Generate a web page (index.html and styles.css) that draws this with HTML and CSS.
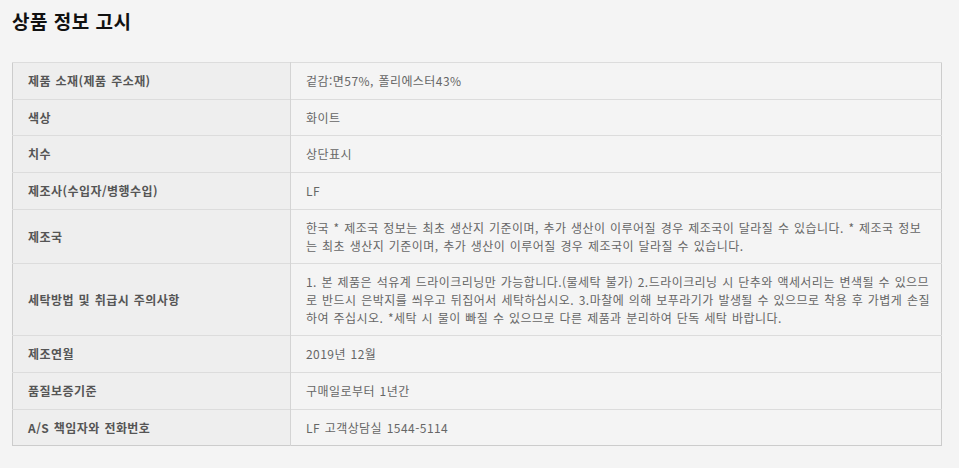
FILE: index.html
```html
<!DOCTYPE html>
<html lang="ko">
<head>
<meta charset="utf-8">
<title>상품 정보 고시</title>
<link rel="stylesheet" href="styles.css">
</head>
<body>
<div class="page">
  <h1 class="title">상품 정보 고시</h1>
  <table class="info">
    <tbody>
      <tr><th>제품 소재(제품 주소재)</th><td>겉감:면57%, 폴리에스터43%</td></tr>
      <tr><th>색상</th><td>화이트</td></tr>
      <tr><th>치수</th><td>상단표시</td></tr>
      <tr><th>제조사(수입자/병행수입)</th><td>LF</td></tr>
      <tr><th>제조국</th><td>한국 * 제조국 정보는 최초 생산지 기준이며, 추가 생산이 이루어질 경우 제조국이 달라질 수 있습니다. * 제조국 정보<br>는 최초 생산지 기준이며, 추가 생산이 이루어질 경우 제조국이 달라질 수 있습니다.</td></tr>
      <tr><th>세탁방법 및 취급시 주의사항</th><td>1. 본 제품은 석유계 드라이크리닝만 가능합니다.(물세탁 불가) 2.드라이크리닝 시 단추와 액세서리는 변색될 수 있으므<br>로 반드시 은박지를 씌우고 뒤집어서 세탁하십시오. 3.마찰에 의해 보푸라기가 발생될 수 있으므로 착용 후 가볍게 손질<br>하여 주십시오. *세탁 시 물이 빠질 수 있으므로 다른 제품과 분리하여 단독 세탁 바랍니다.</td></tr>
      <tr><th>제조연월</th><td>2019년 12월</td></tr>
      <tr><th>품질보증기준</th><td>구매일로부터 1년간</td></tr>
      <tr><th>A/S 책임자와 전화번호</th><td>LF 고객상담실 1544-5114</td></tr>
    </tbody>
  </table>
</div>
</body>
</html>
```
FILE: styles.css
```css
html, body {
  margin: 0;
  padding: 0;
  background: #f4f4f4;
}
body {
  font-family: "Noto Sans CJK KR", "Noto Sans", sans-serif;
}
.page {
  padding: 9px 17px 20px 12px;
}
.title {
  margin: 0 0 29px 0;
  font-size: 19px;
  line-height: 24px;
  font-weight: 700;
  color: #111;
  letter-spacing: 0.5px;
}
.info {
  width: 930px;
  border-collapse: collapse;
  border: 1px solid #cccccc;
  font-size: 12px;
  line-height: 17.7px;
  letter-spacing: 0.45px;
  word-spacing: 0.8px;
}
.info th,
.info td {
  border-top: 1px solid #dcdcdc;
  padding: 9px 5px 9px 15px;
  text-align: left;
  vertical-align: middle;
}
.info th {
  width: 257px;
  background: #eeeeee;
  color: #555;
  font-weight: 700;
  border-right: 1px solid #d4d4d4;
}
.info td {
  background: #f4f4f4;
  color: #666;
  font-weight: 400;
  white-space: nowrap;
}
```
